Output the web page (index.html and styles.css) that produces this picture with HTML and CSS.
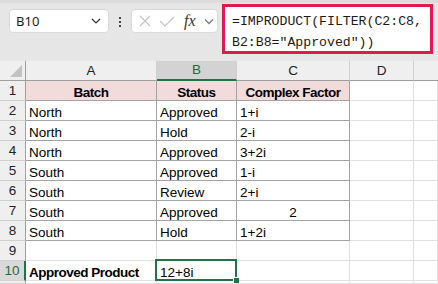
FILE: index.html
```html
<!DOCTYPE html>
<html lang="en">
<head>
    <meta charset="UTF-8">
    <title>IMPRODUCT FILTER</title>
    <link rel="stylesheet" href="styles.css">
</head>
<body>

    <!-- formula bar -->
    <div class="toolbar">
        <div class="namebox">
            <span>B10</span>
            <svg class="chev" width="10" height="6" viewBox="0 0 10 6"><polyline points="1,1 5,5 9,1" fill="none" stroke="#333" stroke-width="1.2"/></svg>
        </div>
        <svg class="dots" width="22" height="24" viewBox="0 0 22 24">
            <rect x="10" y="8" width="2" height="2" fill="#444"/>
            <rect x="10" y="12" width="2" height="2" fill="#444"/>
            <rect x="10" y="16" width="2" height="2" fill="#444"/>
        </svg>
        <div class="fxbox">
            <svg width="12" height="12" viewBox="0 0 12 12"><path d="M1 1 L11 11 M11 1 L1 11" stroke="#c4c4c4" stroke-width="1.2" fill="none"/></svg>
            <svg class="ok" width="16" height="11" viewBox="0 0 16 11"><polyline points="1,5 6,10 15,1" stroke="#c4c4c4" stroke-width="1.2" fill="none"/></svg>
            <span class="fx">fx</span>
            <svg class="chev2" width="10" height="7" viewBox="0 0 10 7"><polyline points="1,1.5 5,5.5 9,1.5" fill="none" stroke="#7a7a7a" stroke-width="1.3"/></svg>
        </div>
        <div class="formula">=IMPRODUCT(FILTER(C2:C8,<br>B2:B8="Approved"))</div>
    </div>

    <!-- sheet -->
    <div class="sheet">
        <div class="hd corner"><svg width="12" height="12" viewBox="0 0 12 12"><polygon points="12,0 12,12 0,12" fill="#c2c2c2"/></svg></div>
        <div class="hd">A</div>
        <div class="hd hd-sel">B</div>
        <div class="hd">C</div>
        <div class="hd">D</div>
        <div class="hd hd-last"></div>

        <div class="rh">1</div>
        <div class="c t th">Batch</div>
        <div class="c t th">Status</div>
        <div class="c t th">Complex Factor</div>
        <div class="c"></div>
        <div class="c"></div>

        <div class="rh">2</div>
        <div class="c t">North</div>
        <div class="c t">Approved</div>
        <div class="c t">1+i</div>
        <div class="c"></div>
        <div class="c"></div>

        <div class="rh">3</div>
        <div class="c t">North</div>
        <div class="c t">Hold</div>
        <div class="c t">2-i</div>
        <div class="c"></div>
        <div class="c"></div>

        <div class="rh">4</div>
        <div class="c t">North</div>
        <div class="c t">Approved</div>
        <div class="c t">3+2i</div>
        <div class="c"></div>
        <div class="c"></div>

        <div class="rh">5</div>
        <div class="c t">South</div>
        <div class="c t">Approved</div>
        <div class="c t">1-i</div>
        <div class="c"></div>
        <div class="c"></div>

        <div class="rh">6</div>
        <div class="c t">South</div>
        <div class="c t">Review</div>
        <div class="c t">2+i</div>
        <div class="c"></div>
        <div class="c"></div>

        <div class="rh">7</div>
        <div class="c t">South</div>
        <div class="c t">Approved</div>
        <div class="c t mid">2</div>
        <div class="c"></div>
        <div class="c"></div>

        <div class="rh">8</div>
        <div class="c t">South</div>
        <div class="c t">Hold</div>
        <div class="c t">1+2i</div>
        <div class="c"></div>
        <div class="c"></div>

        <div class="rh">9</div>
        <div class="c"></div>
        <div class="c"></div>
        <div class="c"></div>
        <div class="c"></div>
        <div class="c"></div>

        <div class="rh rh-sel">10</div>
        <div class="c bold">Approved Product</div>
        <div class="c active">12+8i</div>
        <div class="c"></div>
        <div class="c"></div>
        <div class="c"></div>

        <!-- row 11, only its top edge is in view -->
        <div class="rh"></div>
        <div class="c"></div>
        <div class="c"></div>
        <div class="c"></div>
        <div class="c"></div>
        <div class="c"></div>
    </div>

</body>
</html>
```

FILE: styles.css
```css
body {
    margin: 0;
    width: 438px;
    height: 284px;
    overflow: hidden;
    background: #fff;
    font-family: "Liberation Sans", Arial, sans-serif;
}

/* formula bar area */
.toolbar {
    height: 61px;
    background: #e6e6e6;
    box-shadow: inset 0 3px 0 #dcdcdc;
    display: flex;
    align-items: flex-start;
}
.namebox {
    margin: 9px 0 0 9px;
    width: 100px;
    height: 24px;
    box-sizing: border-box;
    background: #fff;
    border: 1px solid #dadada;
    border-radius: 4px;
    display: flex;
    align-items: center;
    justify-content: space-between;
    padding: 0 6px 0 6px;
    font-family: "Noto Sans", "Open Sans", sans-serif;
    font-size: 13px;
    color: #1a1a1a;
}
.namebox .chev {
    margin-right: 1px;
}
.dots {
    margin-top: 9px;
}
.fxbox {
    margin-top: 9px;
    width: 87px;
    height: 24px;
    box-sizing: border-box;
    background: #fff;
    border: 1px solid #dadada;
    border-radius: 4px;
    display: flex;
    align-items: center;
    padding-left: 7px;
}
.fxbox svg {
    flex: none;
    display: block;
}
.fxbox .ok {
    margin-left: 8px;
}
.fx {
    margin-left: 9px;
    font-family: "Liberation Serif", serif;
    font-style: italic;
    font-size: 16px;
    color: #333;
    line-height: 16px;
}
.fxbox .chev2 {
    margin-left: 8px;
}
.formula {
    margin: 4px 0 0 4px;
    width: 211px;
    height: 50px;
    box-sizing: border-box;
    background: #fff;
    border: 3px solid #e3194b;
    padding: 4px 0 0 7px;
    font-family: "Liberation Mono", monospace;
    font-size: 13.2px;
    line-height: 21px;
    color: #1a1a1a;
    white-space: nowrap;
}

/* grid */
.sheet {
    display: grid;
    grid-template-columns: 26px 131px 80px 113px 64px 24px;
    grid-template-rows: repeat(11, 20px) 3px;
    font-size: 13.5px;
    color: #000;
}
.hd, .rh, .c {
    box-sizing: border-box;
    overflow: hidden;
    white-space: nowrap;
}
.hd {
    background: #efefef;
    border-right: 1px solid #cfcfcf;
    border-bottom: 1px solid #9e9e9e;
    text-align: center;
    line-height: 19px;
    color: #222;
}
.corner {
    border-right-color: #9e9e9e;
    display: flex;
    align-items: flex-end;
    justify-content: flex-end;
    padding: 0 3px 3px 0;
}
.corner svg {
    display: block;
}
.hd-sel {
    background: #d3d3d3;
    color: #1e6b41;
    border-bottom: 2px solid #217346;
    line-height: 18px;
}
.hd-last {
    border-right: none;
}
.rh {
    background: #efefef;
    border-right: 1px solid #9e9e9e;
    border-bottom: 1px solid #cfcfcf;
    text-align: center;
    line-height: 20px;
    color: #222;
}
.rh-sel {
    background: #d9d9d9;
    color: #1e6b41;
    border-right: 2px solid #217346;
}
.c {
    border-right: 1px solid #e1e1e1;
    border-bottom: 1px solid #e1e1e1;
    padding-left: 3px;
    line-height: 23px;
}
.t {
    border-right-color: #a3a3a3;
    border-bottom-color: #a3a3a3;
}
.th {
    background: #f2dcdb;
    font-weight: bold;
    text-align: center;
    padding-left: 0;
    letter-spacing: -0.5px;
}
.mid {
    text-align: center;
    padding-left: 0;
}
.bold {
    font-weight: bold;
    letter-spacing: -0.5px;
}
.active {
    position: relative;
    overflow: visible;
}
/* selection frame around B10 */
.active::before {
    content: "";
    position: absolute;
    left: -2px;
    top: -2px;
    right: -1px;
    bottom: -1px;
    border: 2px solid #217346;
}
.active::after {
    content: "";
    position: absolute;
    right: -3px;
    bottom: -3px;
    width: 5px;
    height: 5px;
    background: #217346;
    border-left: 1px solid #fff;
    border-top: 1px solid #fff;
}
```
